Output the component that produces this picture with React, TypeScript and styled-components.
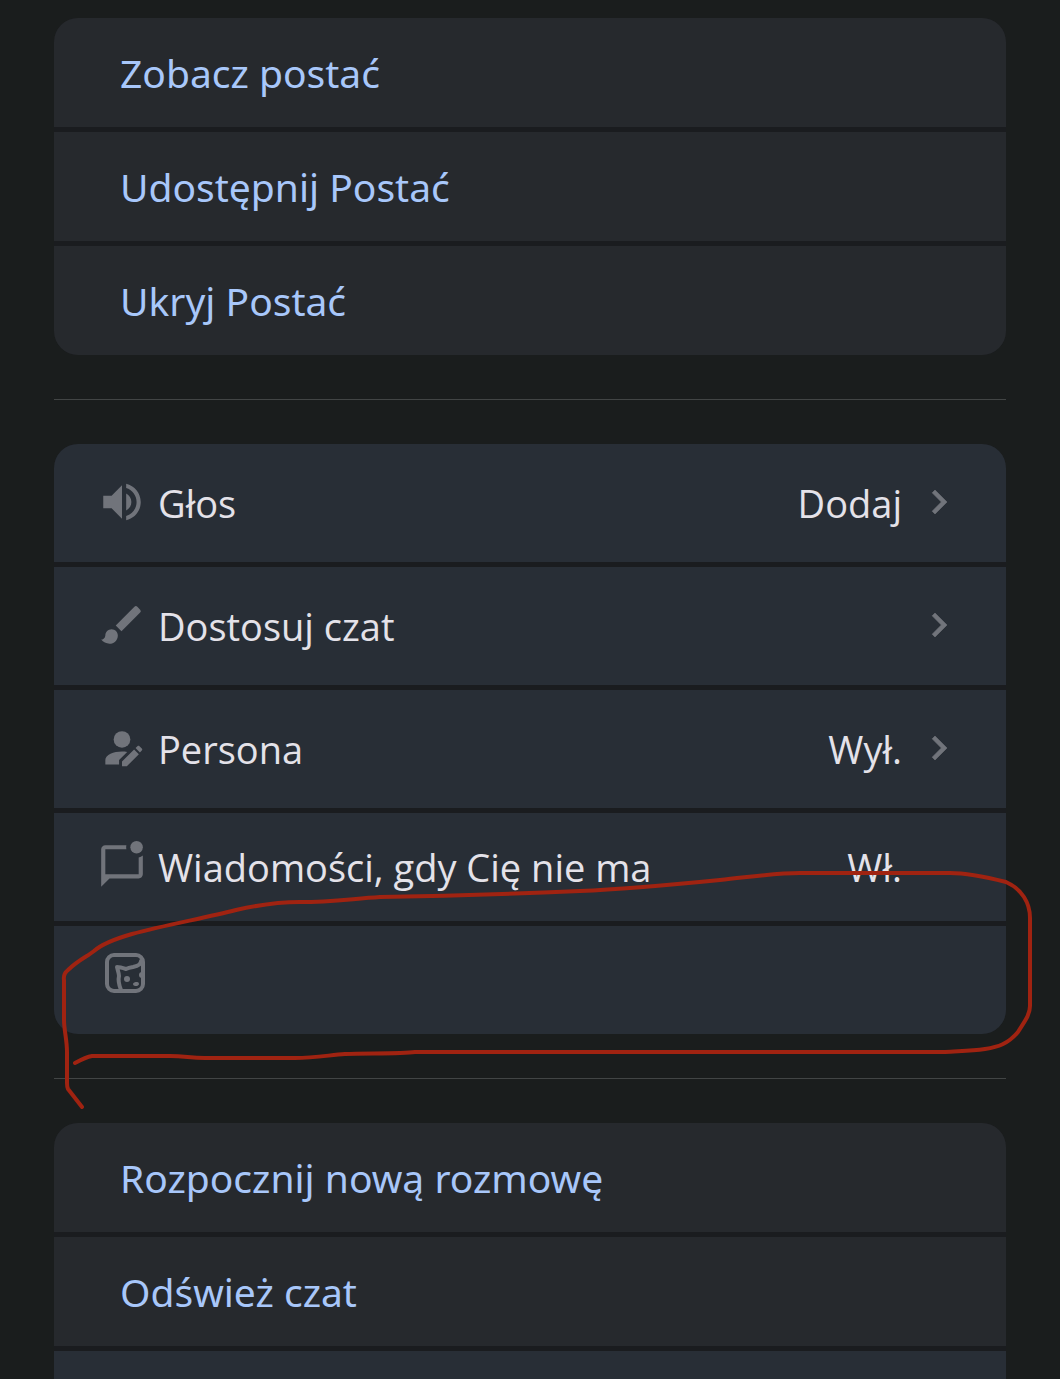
import React from 'react';
import styled, { createGlobalStyle } from 'styled-components';

const GlobalStyle = createGlobalStyle`
  *, *::before, *::after { box-sizing: border-box; }
  body { margin: 0; background: #1a1d1d; }
`;

const Page = styled.main`
  position: relative;
  height: 100vh;
  overflow-x: hidden;
  overflow-y: auto;
  scrollbar-width: none;
  display: flex;
  flex-direction: column;
  gap: 44px;
  padding: 18px 54px 0;
  background: #1a1d1d;
  font-family: 'Open Sans', 'Noto Sans', sans-serif;
`;

const Card = styled.section<{ $open?: boolean }>`
  flex: none;
  display: flex;
  flex-direction: column;
  gap: 5px;
  overflow: hidden;
  border-radius: ${({ $open }) => ($open ? '24px 24px 0 0' : '24px')};
  background: #1a1c1f;
`;

const Divider = styled.hr`
  flex: none;
  width: 100%;
  height: 1px;
  margin: 0;
  border: 0;
  background: #424545;
`;

const RowButton = styled.button`
  display: flex;
  align-items: center;
  width: 100%;
  margin: 0;
  border: 0;
  font-family: inherit;
  font-size: 38px;
  line-height: 52px;
  text-align: left;
  cursor: pointer;
`;

const LinkRow = styled(RowButton)`
  min-height: 109px;
  padding: 0 66px;
  background: #26292d;
  color: #a8c7fa;
  font-family: 'Noto Sans', 'Open Sans', sans-serif;
  font-size: 39px;
`;

const SettingRow = styled(RowButton)<{ $compact?: boolean }>`
  min-height: ${({ $compact }) => ($compact ? 108 : 118)}px;
  padding: 0 43px 1px;
  background: #282e36;
  color: #e4e2e9;
`;

const IconSlot = styled.span<{ $raised?: boolean }>`
  flex: none;
  display: flex;
  justify-content: center;
  width: 50px;
  margin-right: 11px;
  padding-left: ${({ $raised }) => ($raised ? 6 : 0)}px;
  padding-bottom: ${({ $raised }) => ($raised ? 14 : 2)}px;
  color: #71747b;
`;

const Icon = styled.svg<{ $size: number }>`
  flex: none;
  display: block;
  width: ${({ $size }) => $size}px;
  height: ${({ $size }) => $size}px;
  fill: currentColor;
`;

const Label = styled.span`
  flex: 1;
  min-width: 0;
`;

const Value = styled.span`
  margin-right: 13px;
`;

const ChevronSlot = styled.span`
  flex: none;
  width: 48px;
  padding-bottom: 2px;
  color: #71747b;
`;

const Scribble = styled.svg`
  position: absolute;
  top: 860px;
  left: 50px;
  width: 1000px;
  height: 260px;
  pointer-events: none;
  fill: none;
  stroke: #a02311;
  stroke-width: 4;
  stroke-linecap: round;
  stroke-linejoin: round;
`;

const VolumeIcon = () => (
  <Icon $size={50} viewBox="0 0 24 24" aria-hidden="true">
    <path d="M3 9v6h4l5 5V4L7 9H3zm13.5 3c0-1.77-1.02-3.29-2.5-4.03v8.05c1.48-.73 2.5-2.25 2.5-4.02zM14 3.23v2.06c2.89.86 5 3.54 5 6.71s-2.11 5.85-5 6.71v2.06c4.01-.91 7-4.49 7-8.77s-2.99-7.86-7-8.77z" />
  </Icon>
);

const BrushIcon = () => (
  <Icon $size={50} viewBox="0 0 24 24" aria-hidden="true">
    <path d="M7 14c-1.66 0-3 1.34-3 3 0 1.31-1.16 2-2 2 .92 1.22 2.49 2 4 2 2.21 0 4-1.79 4-4 0-1.66-1.34-3-3-3zm13.71-9.37-1.34-1.34a.996.996 0 0 0-1.41 0L9 12.25 11.75 15l8.96-8.96a.996.996 0 0 0 0-1.41z" />
  </Icon>
);

const PersonEditIcon = () => (
  <Icon $size={50} viewBox="0 0 24 24" aria-hidden="true">
    <circle cx="12" cy="7.9" r="4" />
    <path d="M4 19.9v-2.1c0-2.5 4-4.1 8-4.1.9 0 1.7.05 2.5.2l-3.9 3.9v2.1z" />
    <path d="M12 20.8v-2.3l5.8-5.8 2.3 2.3-5.8 5.8zM18.5 12l.9-.9c.3-.3.7-.3 1 0l1.1 1.1c.3.3.3.7 0 1l-.9.9z" />
  </Icon>
);

const UnreadChatIcon = () => (
  <Icon $size={50} viewBox="0 0 24 24" aria-hidden="true">
    <path d="M22 6.98V16c0 1.1-.9 2-2 2H6l-4 4V4c0-1.1.9-2 2-2h10.1c-.06.32-.1.66-.1 1s.04.68.1 1H4v12h16V7.9c.74-.15 1.42-.48 2-.92z" />
    <circle cx="19" cy="3" r="3" />
  </Icon>
);

const StickerIcon = () => (
  <Icon $size={40} viewBox="0 0 40 40" aria-hidden="true">
    <g fill="none" stroke="currentColor" strokeWidth="4" strokeLinejoin="round" strokeLinecap="round">
      <rect x="2" y="2" width="36" height="36" rx="7" />
      <path d="M36 8c0 3-3 5-8 6-3 .5-5 1-7 2-3-1-6-2-9-2 .5 3 2 6 2 9-1 4 0 9 2 14" />
    </g>
    <ellipse cx="22" cy="26" rx="3" ry="3" />
    <ellipse cx="31" cy="31" rx="3" ry="2" transform="rotate(-12 31 31)" />
    <ellipse cx="37" cy="22" rx="3" ry="3" />
  </Icon>
);

const Chevron = () => (
  <Icon $size={48} viewBox="0 0 24 24" aria-hidden="true">
    <path d="M10 6 8.59 7.41 13.17 12l-4.58 4.59L10 18l6-6z" stroke="currentColor" strokeWidth="0.3" />
  </Icon>
);

interface SettingProps {
  icon: React.ReactNode;
  label?: string;
  name?: string;
  value?: string;
  chevron?: boolean;
  compact?: boolean;
  raised?: boolean;
}

const Setting = ({ icon, label, name, value, chevron, compact, raised }: SettingProps) => (
  <SettingRow type="button" $compact={compact} aria-label={name}>
    <IconSlot $raised={raised}>{icon}</IconSlot>
    <Label>{label}</Label>
    {value && <Value>{value}</Value>}
    <ChevronSlot>{chevron && <Chevron />}</ChevronSlot>
  </SettingRow>
);

export default function App() {
  return (
    <>
      <GlobalStyle />
      <Page>
        <Card>
          <LinkRow type="button">Zobacz postać</LinkRow>
          <LinkRow type="button">Udostępnij Postać</LinkRow>
          <LinkRow type="button">Ukryj Postać</LinkRow>
        </Card>
        <Divider />
        <Card>
          <Setting icon={<VolumeIcon />} label="Głos" value="Dodaj" chevron />
          <Setting icon={<BrushIcon />} label="Dostosuj czat" chevron />
          <Setting icon={<PersonEditIcon />} label="Persona" value="Wył." chevron />
          <Setting icon={<UnreadChatIcon />} label="Wiadomości, gdy Cię nie ma" value="Wł." compact />
          <Setting icon={<StickerIcon />} name="Naklejki" compact raised />
        </Card>
        <Divider />
        <Card $open>
          <LinkRow type="button">Rozpocznij nową rozmowę</LinkRow>
          <LinkRow type="button">Odśwież czat</LinkRow>
          <SettingRow type="button" $compact aria-label="Historia" />
        </Card>
        <Scribble viewBox="50 860 1000 260" aria-hidden="true">
          <path d="M82 1107 68 1089Q67 1087 67 1083V1052C67 1040 64 1030 64 1020V980Q63 974 68 970C78 960 88 956 94 951C103 943 118 938 132 934C165 925 205 918 236 910C258 905 275 902 300 902C330 902 350 899 380 897C440 896 510 894 580 891C630 889 670 885 720 880C750 877 775 873 800 873H950C970 873 990 878 1006 882C1022 889 1030 903 1030 918V1006C1030 1015 1024 1022 1018 1032C1008 1044 998 1047 985 1049C970 1051 958 1051 945 1052H415C400 1054 365 1053 345 1054C330 1055 315 1058 295 1058H205C190 1058 185 1056 170 1056H92Q86 1057 75 1063" />
        </Scribble>
      </Page>
    </>
  );
}
